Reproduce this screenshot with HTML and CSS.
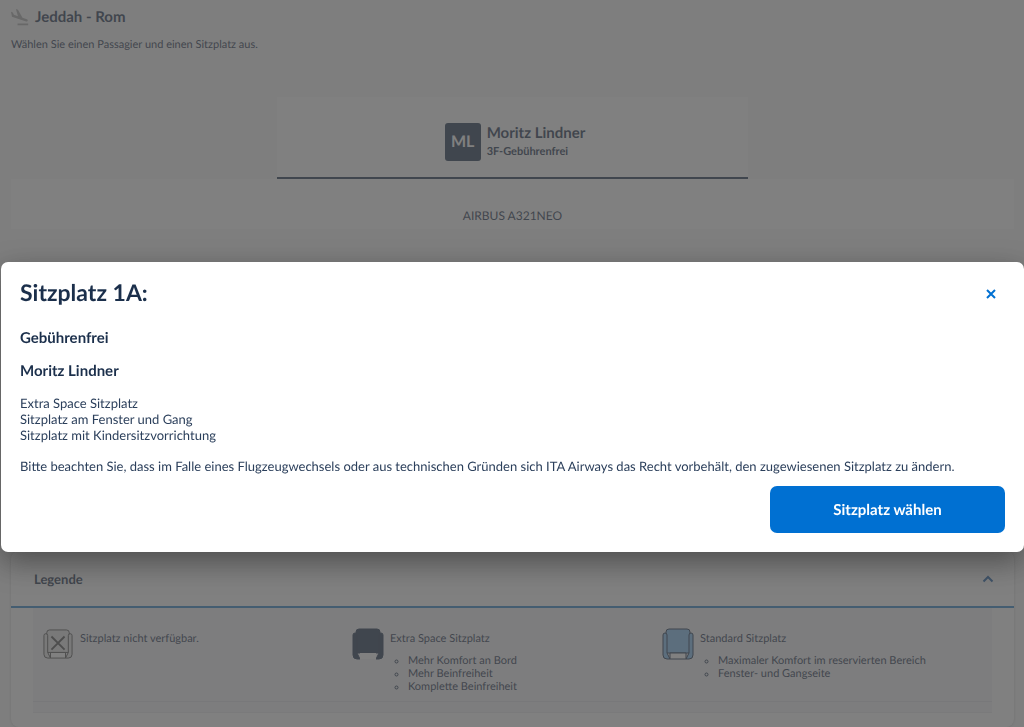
FILE: index.html
```html
<!DOCTYPE html>
<html lang="de">

<head>
    <meta charset="UTF-8">
    <meta name="viewport" content="width=device-width, initial-scale=1.0">
    <title>Sitzplatz wählen</title>
    <link rel="stylesheet" href="styles.css">
</head>

<body>
    <main class="page">
        <header class="route">
            <svg class="route-icon" viewBox="2 1 22 22" aria-hidden="true">
                <path d="M10 20h13v2H10zM20.500 17.500c.9.3 1.700-.1 1.900-.8.3-.8-.2-1.600-1-1.900l-5.400-1.900L10.500 3 8 2.200l2.500 8.800-5-1.700-1.300-2.900L2 5.700l1.200 6z" />
            </svg>
            <h1>Jeddah - Rom</h1>
        </header>
        <p class="intro">Wählen Sie einen Passagier und einen Sitzplatz aus.</p>

        <div class="passenger">
            <span class="initials">ML</span>
            <div>
                <div class="passenger-name">Moritz Lindner</div>
                <div class="passenger-seat">3F-Gebührenfrei</div>
            </div>
        </div>

        <div class="aircraft">AIRBUS A321NEO</div>
        <div class="seatmap"></div>

        <section class="legend">
            <button type="button" class="legend-toggle" aria-expanded="true">
                Legende
                <svg class="chevron" viewBox="0 0 12 8" aria-hidden="true">
                    <path d="M1.500 6.500L6 2l4.500 4.500" />
                </svg>
            </button>
            <div class="legend-body">
                <div class="legend-list">
                    <div class="legend-item unavailable">
                        <svg class="seat" viewBox="0 0 32 32" aria-hidden="true">
                            <path class="seat-back" d="M4 5V4q0-3 3-3h18q3 0 3 3v21H4z" />
                            <path class="seat-arm" d="M5 25V7q0-2-2-2T1 7v20q0 4 4 4h3l-3-6M27 25V7q0-2 2-2t2 2v20q0 4-4 4h-3l3-6" />
                            <path class="seat-front" d="M8 25h16v6H8z" />
                            <path class="seat-cross" d="M9 8l14 14M23 8L9 22" />
                        </svg>
                        <div class="legend-title">Sitzplatz nicht verfügbar.</div>
                    </div>
                    <div class="legend-item extra">
                        <svg class="seat" viewBox="0 0 32 32" aria-hidden="true">
                            <path class="seat-back" d="M4 5V4q0-3 3-3h18q3 0 3 3v21H4z" />
                            <path class="seat-arm" d="M5 25V7q0-2-2-2T1 7v20q0 4 4 4h3l-3-6M27 25V7q0-2 2-2t2 2v20q0 4-4 4h-3l3-6" />
                            <path class="seat-front" d="M8 25h16v6H8z" />
                        </svg>
                        <div>
                            <div class="legend-title">Extra Space Sitzplatz</div>
                            <ul>
                                <li>Mehr Komfort an Bord</li>
                                <li>Mehr Beinfreiheit</li>
                                <li>Komplette Beinfreiheit</li>
                            </ul>
                        </div>
                    </div>
                    <div class="legend-item standard">
                        <svg class="seat" viewBox="0 0 32 32" aria-hidden="true">
                            <path class="seat-back" d="M4 5V4q0-3 3-3h18q3 0 3 3v21H4z" />
                            <path class="seat-arm" d="M5 25V7q0-2-2-2T1 7v20q0 4 4 4h3l-3-6M27 25V7q0-2 2-2t2 2v20q0 4-4 4h-3l3-6" />
                            <path class="seat-front" d="M8 25h16v6H8z" />
                        </svg>
                        <div>
                            <div class="legend-title">Standard Sitzplatz</div>
                            <ul>
                                <li>Maximaler Komfort im reservierten Bereich</li>
                                <li>Fenster- und Gangseite</li>
                            </ul>
                        </div>
                    </div>
                </div>
            </div>
        </section>
    </main>

    <div class="overlay">
        <div class="modal" role="dialog" aria-modal="true" aria-labelledby="modalTitle">
            <div class="modal-header">
                <h2 id="modalTitle">Sitzplatz 1A:</h2>
                <button type="button" class="close" aria-label="Schließen">
                    <svg viewBox="0 0 10 10" aria-hidden="true">
                        <path d="M1 1l8 8M9 1L1 9" />
                    </svg>
                </button>
            </div>
            <h3>Gebührenfrei</h3>
            <h3>Moritz Lindner</h3>
            <p>
                Extra Space Sitzplatz<br>
                Sitzplatz am Fenster und Gang<br>
                Sitzplatz mit Kindersitzvorrichtung
            </p>
            <p>Bitte beachten Sie, dass im Falle eines Flugzeugwechsels oder aus technischen Gründen sich ITA Airways das Recht vorbehält, den zugewiesenen Sitzplatz zu ändern.</p>
            <div class="modal-footer">
                <button type="button" class="select-seat">Sitzplatz wählen</button>
            </div>
        </div>
    </div>
</body>

</html>
```
FILE: styles.css
```css
* {
    box-sizing: border-box;
}

body {
    margin: 0;
    font-family: Lato, "Liberation Sans", sans-serif;
    font-size: 13px;
    color: #1b2f4b;
    background-color: #f7f7f7;
    text-rendering: geometricPrecision;
}

h1,
h2,
h3,
p,
ul {
    margin: 0;
}

button {
    font-family: inherit;
    border: none;
    cursor: pointer;
    text-rendering: inherit;
}

.page {
    padding: 6px 10px 0 11px;
}

.route {
    display: flex;
    align-items: center;
    gap: 6px;
    height: 22px;
}

.route-icon {
    width: 18px;
    height: 18px;
    fill: #a8a8a8;
}

h1 {
    font-size: 15px;
    font-weight: 700;
}

.intro {
    margin-top: 8px;
    font-size: 11px;
    line-height: 18px;
}

.passenger {
    display: flex;
    align-items: center;
    justify-content: center;
    gap: 6px;
    width: 47%;
    height: 82px;
    margin: 43px auto 0;
    padding: 10px 0 0 5px;
    background-color: #fff;
    border-bottom: 2px solid #1b2f4b;
}

.initials {
    width: 36px;
    border-radius: 3px;
    background-color: #1b2f4b;
    color: #fff;
    font-size: 16px;
    font-weight: 700;
    line-height: 38px;
    text-align: center;
}

.passenger-name {
    font-size: 15px;
    font-weight: 700;
    line-height: 20px;
}

.passenger-seat {
    font-size: 11px;
    font-weight: 700;
    line-height: 18px;
}

.aircraft {
    padding: 27px 0 3px;
    background-color: #fff;
    font-size: 12px;
    line-height: 20px;
    text-align: center;
}

.seatmap {
    height: 322px;
}

.legend {
    padding-bottom: 14px;
    border-radius: 8px;
    background-color: #fff;
    box-shadow: 0 0 3px rgba(0, 0, 0, 0.2);
}

.legend-toggle {
    display: flex;
    align-items: center;
    justify-content: space-between;
    width: 100%;
    height: 57px;
    padding: 0 20px 0 23px;
    border-bottom: 2px solid #2a80c8;
    background: none;
    color: inherit;
    font-size: 13px;
    font-weight: 700;
}

.chevron {
    width: 12px;
    height: 8px;
    fill: none;
    stroke: #1b5fa8;
    stroke-width: 2;
}

.legend-body {
    margin: 0 22px;
    padding-bottom: 10px;
    border-bottom: 1px solid #e8e8ee;
    background-color: #f4f4f7;
}

.legend-list {
    display: grid;
    grid-template-columns: repeat(3, 1fr);
    height: 94px;
    padding: 20px 20px 0 9px;
    border-bottom: 1px solid #e0e0e8;
}

.legend-item {
    display: flex;
    align-items: flex-start;
    gap: 6px;
    font-size: 11px;
}

.legend-title {
    line-height: 22px;
}

.legend-item ul {
    margin-top: 4px;
    padding-left: 18px;
    list-style: circle;
    line-height: 13px;
}

.seat {
    width: 32px;
    height: 32px;
    stroke: #1b2f4b;
    stroke-width: 1;
}

.seat-front {
    fill: #fff;
}

.unavailable .seat {
    padding: 1px;
    fill: #e4e4e4;
    stroke: #4a4a4a;
}

.unavailable .seat-cross {
    fill: none;
    stroke-width: 2;
}

.extra .seat {
    fill: #1b2f4b;
}

.extra .seat-front {
    stroke: none;
}

.standard .seat {
    fill: #7fbdf5;
}

.overlay {
    position: fixed;
    inset: 0;
    padding: 262px 0 0 1px;
    background-color: rgba(79, 79, 79, 0.72);
}

.modal {
    padding: 15px 19px 19px;
    border-radius: 7px;
    background-color: #fff;
    box-shadow: 0 10px 30px rgba(0, 0, 0, 0.4);
}

.modal-header {
    display: flex;
    justify-content: space-between;
    margin-bottom: 17px;
}

h2 {
    font-size: 23px;
    font-weight: 700;
    line-height: 30px;
}

.close {
    width: 28px;
    height: 34px;
    padding: 0 9px;
    background: none;
}

.close svg {
    display: block;
    width: 10px;
    height: 10px;
    stroke: #0070d2;
    stroke-width: 2;
}

h3 {
    margin-bottom: 13px;
    font-size: 15px;
    font-weight: 700;
    line-height: 20px;
}

.modal p {
    margin: 14px 0 15px;
    line-height: 16px;
    color: #2b3f5b;
}

.modal-footer {
    display: flex;
    justify-content: flex-end;
    margin-top: -3px;
}

.select-seat {
    width: 235px;
    height: 47px;
    border-radius: 7px;
    background-color: #0070d2;
    color: #fff;
    font-size: 15px;
    font-weight: 700;
}
```
